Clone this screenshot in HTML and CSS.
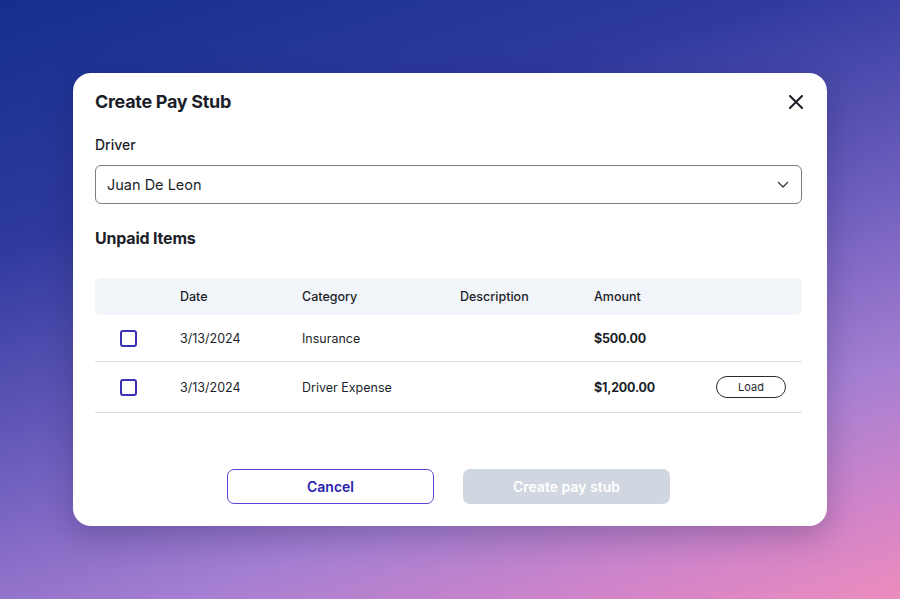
FILE: index.html
```html
<!DOCTYPE html>
<html lang="en">

<head>
    <meta charset="UTF-8">
    <meta name="viewport" content="width=device-width, initial-scale=1.0">
    <title>Create Pay Stub</title>
    <link rel="stylesheet" href="styles.css">
</head>

<body>
    <div class="modal">
        <div class="modal-header">
            <h2>Create Pay Stub</h2>
            <button class="close-btn" type="button" aria-label="Close">
                <svg width="14" height="14" viewBox="0 0 14 14">
                    <path d="M1 1 L13 13 M13 1 L1 13" stroke="#1c1f2a" stroke-width="2" stroke-linecap="round" />
                </svg>
            </button>
        </div>

        <label class="field-label" for="driver">Driver</label>
        <div class="select-box" id="driver">
            <span>Juan De Leon</span>
            <svg width="12" height="8" viewBox="0 0 12 8">
                <path d="M1.5 1.5 L6 6 L10.5 1.5" fill="none" stroke="#3a3d48" stroke-width="1.4" stroke-linecap="round" stroke-linejoin="round" />
            </svg>
        </div>

        <h3>Unpaid Items</h3>

        <div class="items-table">
            <div class="row head">
                <div></div>
                <div>Date</div>
                <div>Category</div>
                <div>Description</div>
                <div>Amount</div>
                <div></div>
            </div>
            <div class="row item">
                <div><span class="checkbox"></span></div>
                <div>3/13/2024</div>
                <div>Insurance</div>
                <div></div>
                <div class="amount">$500.00</div>
                <div></div>
            </div>
            <div class="row item tall">
                <div><span class="checkbox"></span></div>
                <div>3/13/2024</div>
                <div>Driver Expense</div>
                <div></div>
                <div class="amount">$1,200.00</div>
                <div><button class="load-btn" type="button">Load</button></div>
            </div>
        </div>

        <div class="actions">
            <button class="btn btn-cancel" type="button">Cancel</button>
            <button class="btn btn-create" type="button" disabled>Create pay stub</button>
        </div>
    </div>
</body>

</html>
```

FILE: styles.css
```css
body {
    font-family: Inter, "Noto Sans", sans-serif;
    margin: 0;
    height: 599px;
    display: flex;
    justify-content: center;
    align-items: center;
    color: #1c1f2a;
    background: linear-gradient(162deg, #142f8d 0%, #2f3a9e 28%, #6a5cbc 52%, #a67fd2 74%, #d585c8 90%, #ec8cbd 100%);
    overflow: hidden;
}

.modal {
    width: 754px;
    box-sizing: border-box;
    background: #fff;
    border-radius: 18px;
    padding: 17px 25px 22px 22px;
    box-shadow: 0 10px 30px rgba(20, 20, 60, 0.25);
}

.modal-header {
    display: flex;
    justify-content: space-between;
    align-items: center;
}

h2 {
    margin: 0;
    font-size: 18px;
    font-weight: 700;
    line-height: 24px;
    letter-spacing: -0.3px;
}

.close-btn {
    background: none;
    border: none;
    padding: 0;
    margin-right: -1px;
    display: flex;
}

.field-label {
    display: block;
    margin-top: 21px;
    font-size: 14px;
    font-weight: 500;
    line-height: 20px;
}

.select-box {
    margin-top: 10px;
    height: 39px;
    box-sizing: border-box;
    border: 1px solid #7a7d86;
    border-radius: 6px;
    padding: 0 12px 0 11px;
    display: flex;
    justify-content: space-between;
    align-items: center;
    font-size: 14.5px;
}

h3 {
    margin: 23px 0 0;
    font-size: 16px;
    font-weight: 700;
    line-height: 22px;
    letter-spacing: -0.2px;
}

.items-table {
    margin-top: 29px;
    font-size: 12.5px;
}

.row {
    display: grid;
    grid-template-columns: 85px 122px 158px 134px 122px 1fr;
    align-items: center;
}

.row.head {
    height: 37px;
    background: #f2f5f9;
    border-radius: 6px;
    font-weight: 500;
}

.row.item {
    height: 46px;
    border-bottom: 1px solid #dcdde0;
}

.row.item.tall {
    height: 50px;
}

.checkbox {
    display: block;
    width: 13px;
    height: 13px;
    margin-left: 25px;
    border: 2px solid #3a2fb5;
    border-radius: 3px;
}

.amount {
    font-weight: 700;
    letter-spacing: -0.2px;
}

.load-btn {
    width: 70px;
    height: 22px;
    border: 1px solid #2a2c35;
    border-radius: 11px;
    background: #fff;
    font-family: Inter, "Noto Sans", sans-serif;
    font-size: 11px;
    color: #1c1f2a;
    padding: 0;
}

.actions {
    margin-top: 56px;
    display: flex;
    justify-content: center;
    gap: 29px;
}

.btn {
    width: 207px;
    height: 35px;
    border-radius: 7px;
    font-family: Inter, "Noto Sans", sans-serif;
    font-size: 14px;
    font-weight: 600;
}

.btn-cancel {
    background: #fff;
    border: 1px solid #5a46d2;
    color: #2b1fae;
}

.btn-create {
    background: #d1d7e0;
    border: none;
    color: #fff;
}
```
